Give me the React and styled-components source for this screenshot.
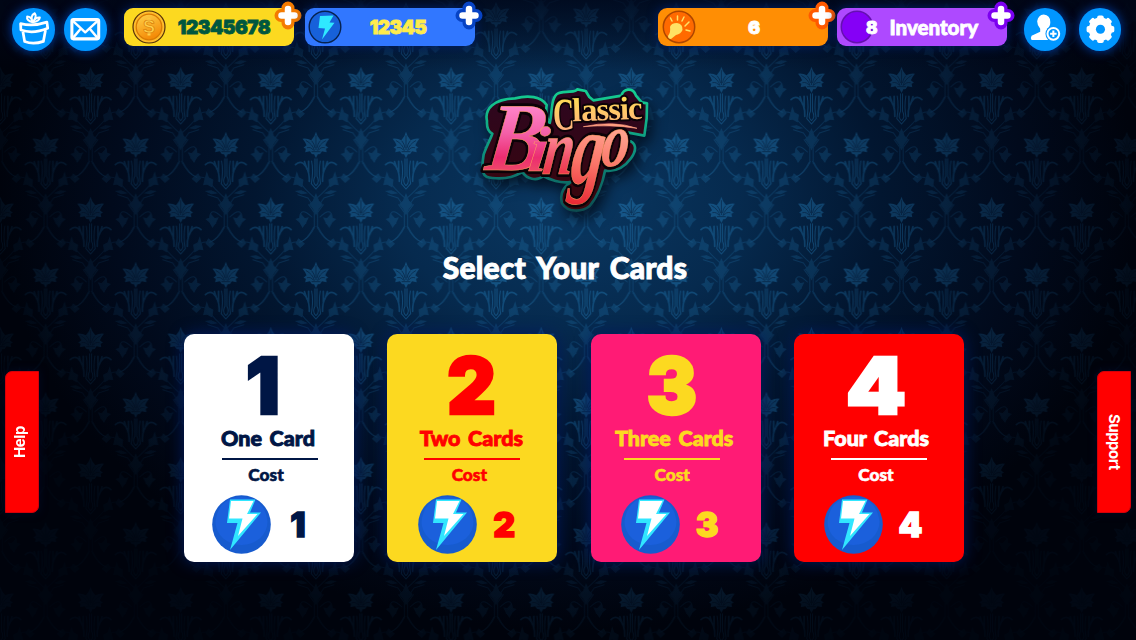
import React from "react";
import styled, { createGlobalStyle, css } from "styled-components";

const Global = createGlobalStyle`
  * { box-sizing: border-box; }
  body { margin: 0; background: #000310; overflow: hidden; }
`;

const Screen = styled.main`
  position: relative;
  isolation: isolate;
  width: 1136px;
  height: 640px;
  overflow: hidden;
  display: flex;
  flex-direction: column;
  font-family: Lato, "Liberation Sans", sans-serif;
  color: #fff;
`;

const Wallpaper = styled.svg`
  position: absolute;
  inset: 0;
  z-index: -1;
`;

const TopBar = styled.header`
  display: flex;
  align-items: flex-start;
  height: 54px;
  padding: 8px 0 0 12px;
`;

const RoundButton = styled.button`
  flex: none;
  width: 42.5px;
  height: 42.5px;
  margin: 0 ${(p) => p.$after}px 0 0;
  padding: 0;
  border: 0;
  border-radius: 50%;
  background: #0096ff;
  box-shadow: 0 0 11px #003fae;
  svg { display: block; width: 100%; height: 100%; }
`;

const Pill = styled.div`
  position: relative;
  flex: none;
  display: flex;
  align-items: center;
  justify-content: center;
  width: 170px;
  height: 38px;
  margin-right: ${(p) => p.$after}px;
  padding-left: ${(p) => p.$indent}px;
  border-radius: 9px;
  background: ${(p) => p.$bg};
  color: ${(p) => p.$ink};
  box-shadow: 0 0 11px #00206b;
`;

const Amount = styled.span`
  z-index: 1;
  padding-top: 1px;
  font: 900 ${(p) => p.$size || 19}px/38px Inter, sans-serif;
  letter-spacing: ${(p) => p.$tracking || 0}px;
  -webkit-text-stroke: 0.8px currentColor;
`;

const InventoryLabel = styled.span`
  font-size: 20.5px;
  font-weight: 900;
  line-height: 38px;
  margin-left: 12px;
  -webkit-text-stroke: 0.8px currentColor;
`;

const PillIcon = styled.svg`
  position: absolute;
  left: ${(p) => p.$left}px;
  top: 2px;
  width: 34px;
  height: 34px;
`;

const PlusBadge = styled.svg`
  position: absolute;
  right: -7.5px;
  top: -7px;
  width: 28px;
  height: 29px;
`;

const Hero = styled.section`
  display: flex;
  flex-direction: column;
  align-items: center;
  height: 280px;
  padding: 21px 6px 0 0;
`;

const Logo = styled.svg`
  display: block;
  width: 200px;
  height: 150px;
  filter: drop-shadow(4px 7px 7px rgba(0, 5, 15, 0.75));
`;

const Title = styled.h1`
  margin: 21.5px 0 0;
  font-size: 30px;
  font-weight: 900;
  line-height: 40px;
  letter-spacing: 0.2px;
  word-spacing: 4px;
  white-space: nowrap;
  -webkit-text-stroke: 0.9px currentColor;
`;

const CardRow = styled.section`
  display: grid;
  grid-template-columns: repeat(4, 170px);
  column-gap: 33.33px;
  padding-left: 184px;
`;

const Card = styled.button`
  display: flex;
  flex-direction: column;
  align-items: flex-start;
  height: 228px;
  padding: 0;
  border: 0;
  border-radius: 10px;
  background: ${(p) => p.$bg};
  color: ${(p) => p.$ink};
  font-family: inherit;
  box-shadow: 0 0 16px #001b62;
`;

const centred = css`
  width: ${(p) => p.$mid * 2}px;
  text-align: center;
  white-space: nowrap;
`;

const BigNumber = styled.strong`
  ${centred}
  height: 91px;
  padding-top: 10px;
  font: 900 79px/82px Inter, sans-serif;
  -webkit-text-stroke: 2.5px currentColor;
  transform: scaleX(${(p) => p.$stretch || 1});
`;

const CardName = styled.span`
  ${centred}
  height: 33px;
  font-size: 21.5px;
  font-weight: 900;
  line-height: 26px;
  word-spacing: 2.5px;
  -webkit-text-stroke: 0.9px currentColor;
`;

const Divider = styled.span`
  width: 96px;
  height: 2px;
  margin-left: ${(p) => p.$left}px;
  background: currentColor;
`;

const CostLabel = styled.span`
  ${centred}
  height: 34.5px;
  padding-top: 4px;
  font-size: 17.3px;
  font-weight: 900;
  line-height: 22px;
  -webkit-text-stroke: 0.6px currentColor;
`;

const CostRow = styled.span`
  display: flex;
  align-items: center;
  height: 59px;
  padding-left: ${(p) => p.$left}px;
`;

const CostBolt = styled.svg`
  width: 59px;
  height: 59px;
`;

const CostNumber = styled.strong`
  width: 54px;
  text-align: center;
  font: 900 34px/59px Inter, sans-serif;
  -webkit-text-stroke: 1.4px currentColor;
`;

const SideTab = styled.button`
  position: absolute;
  top: 371px;
  ${(p) => (p.$side === "left" ? "left: 5px; padding: 0 4px 0 0;" : "right: 5px; padding: 0;")}
  width: 34px;
  height: 142px;
  border: 1px solid #d40008;
  border-radius: 7px 0 7px 0;
  background: #ff0000;
  color: #fff;
  display: flex;
  align-items: center;
  justify-content: center;
  box-shadow: 0 0 8px #000a24;
`;

const TabText = styled.span`
  writing-mode: vertical-rl;
  font: 700 15px/20px Inter, sans-serif;
  letter-spacing: ${(p) => p.$tracking}px;
  ${(p) => p.$flip && "transform: rotate(180deg);"}
`;

function Motif() {
  return (
    <g fill="none" stroke="#1e6fa6" strokeWidth="3" strokeLinecap="round">
      <g fill="#1e6fa6" stroke="none" opacity="0.75">
        <path d="M0 -44Q3 -30 14 -18Q26 -25 40 -23Q32 -14 28 -3L37 4L30 7L32 18L18 15Q12 27 6 23L0 35L-6 23Q-12 27 -18 15L-32 18L-30 7L-37 4L-28 -3Q-32 -14 -40 -23Q-26 -25 -14 -18Q-3 -30 0 -44Z" />
      </g>
      <path stroke="#082747" strokeWidth="2.400" d="M0 -32V10M-29 -17Q-9 -6 -5 12M29 -17Q9 -6 5 12M-26 4Q-14 1 -8 11M26 4Q14 1 8 11M-12 -16Q-5 -8 -3 4M12 -16Q5 -8 3 4M-12 16H12" />
      <path opacity=".75" d="M-3 37V90Q-12 108 0 118Q12 108 3 90V37M-13 44Q-7 75 -14 112L0 128L14 112Q7 75 13 44" />
      <path opacity=".65" strokeWidth="5" d="M-20 105Q-18 70 -38 51Q-50 43 -61 55M20 105Q18 70 38 51Q50 43 61 55M-22 77V45M22 77V45M-27 68L-34 46M27 68L34 46" />
      <g opacity=".42">
        <path d="M0 158Q-35 128 -48 108T-86 93Q-110 85 -128 48M0 158Q35 128 48 108T86 93Q110 85 128 48" />
        <path d="M0 190L-24 155L-54 145M0 190L24 155L54 145M-5 246V198L-22 175M5 246V198L22 175M-12 212Q-45 180 -48 212T-30 230M12 212Q45 180 48 212T30 230M-3 240Q-20 278 -48 288M3 240Q20 278 48 288" />
        <g fill="#1e6fa6">
          <path d="M-57 80L-52 94L-39 101L-42 121L-56 113L-66 115L-63 102ZM57 80L52 94L39 101L42 121L56 113L66 115L63 102Z" />
          <path d="M0 144L8 164L18 174L7 188L0 204L-7 188L-18 174L-8 164ZM-46 203L-34 217L-24 215L-31 229L-40 242L-47 228L-58 219L-48 216ZM46 203L34 217L24 215L31 229L40 242L47 228L58 219L48 216Z" />
          <path d="M-83 83L-76 96L-88 108L-100 97ZM83 83L76 96L88 108L100 97ZM-29 140L-43 142L-58 135L-44 133ZM29 140L43 142L58 135L44 133Z" />
        </g>
      </g>
    </g>
  );
}

function Background() {
  const spots = [[135, 100], [135, -290], [0, -95], [270, -95], [0, 295], [270, 295], [135, 490]];
  return (
    <Wallpaper width="1136" height="640" viewBox="0 0 1136 640">
      <defs>
        <pattern id="damask" patternUnits="userSpaceOnUse" x="45.6" y="48" width="90.1" height="130" viewBox="0 0 270 390" preserveAspectRatio="none">
          {spots.map(([x, y]) => (
            <g key={`${x}:${y}`} transform={`translate(${x} ${y})`}><Motif /></g>
          ))}
        </pattern>
        <radialGradient id="glow" gradientUnits="userSpaceOnUse" cx="0" cy="0" r="1" gradientTransform="translate(568 200) scale(570 430)">
          <stop offset="0" stopColor="#0a3862" />
          <stop offset="0.3" stopColor="#062a4e" />
          <stop offset="0.55" stopColor="#021630" />
          <stop offset="0.8" stopColor="#010a1c" />
          <stop offset="1" stopColor="#00030c" />
        </radialGradient>
        <radialGradient id="fade" gradientUnits="userSpaceOnUse" cx="0" cy="0" r="1" gradientTransform="translate(568 210) scale(610 480)">
          <stop offset="0" stopColor="#fff" />
          <stop offset="0.45" stopColor="#b4b4b4" />
          <stop offset="0.75" stopColor="#5c5c5c" />
          <stop offset="1" stopColor="#161616" />
        </radialGradient>
        <linearGradient id="topShade" x1="0" y1="0" x2="0" y2="1">
          <stop offset="0" stopColor="#000618" stopOpacity=".75" />
          <stop offset="1" stopColor="#000618" stopOpacity="0" />
        </linearGradient>
        <mask id="vignette"><rect width="1136" height="640" fill="url(#fade)" /></mask>
      </defs>
      <rect width="1136" height="640" fill="url(#glow)" />
      <rect width="1136" height="640" fill="url(#damask)" mask="url(#vignette)" opacity=".85" />
      <rect width="1136" height="70" fill="url(#topShade)" />
    </Wallpaper>
  );
}

function Plus({ color }) {
  return (
    <PlusBadge viewBox="0 0 28 29">
      <g fill="none" strokeLinecap="round">
        <path d="M14 7V22M7 14.5H21" stroke={color} strokeWidth="13" />
        <path d="M14 8V21M7.5 14.5H20.5" stroke="#fff" strokeWidth="6.5" />
      </g>
    </PlusBadge>
  );
}

function Coin() {
  return (
    <PillIcon $left={8} viewBox="0 0 34 34">
      <defs>
        <linearGradient id="gold" x1="0" y1="0" x2="0.4" y2="1">
          <stop offset="0" stopColor="#ffd34a" />
          <stop offset="1" stopColor="#f48b08" />
        </linearGradient>
      </defs>
      <circle cx="17" cy="17" r="16" fill="#ffbd2c" stroke="#54310b" strokeWidth="1.2" />
      <circle cx="17" cy="17" r="12.8" fill="url(#gold)" stroke="#d97b04" strokeWidth="1.3" />
      <path d="M17 8.500V12M17 22V25.500" stroke="#ffce48" strokeWidth="3" />
      <text x="17" y="23.2" textAnchor="middle" fontFamily="Liberation Sans, sans-serif" fontWeight="700" fontSize="18" fill="#ffce48" stroke="#d87e09" strokeWidth=".7">S</text>
    </PillIcon>
  );
}

function SmallBolt() {
  return (
    <PillIcon $left={3} viewBox="0 0 34 34">
      <circle cx="17" cy="17" r="15.8" fill="#1761da" stroke="#06224f" strokeWidth="1.4" />
      <path d="M12 6L25.500 5.500L21.500 12.500L26.500 12.800L14 29.500L17 18.500L10.500 18Z" fill="#2fe8ff" />
    </PillIcon>
  );
}

function Clap() {
  return (
    <PillIcon $left={3.5} viewBox="0 0 34 34">
      <circle cx="17" cy="17" r="15.7" fill="#ff6a00" stroke="#ad4600" strokeWidth="1.5" />
      <path d="M8 17Q9 13 15 13Q21 14 20.500 20Q19 24 14 25L9 29Q6 29 6 26Q9 22 8 17Z" fill="#ffe164" />
      <path d="M10 11L8.500 8M15.500 10V6M20 11L22 7M23 16L27 12M24 20L28 21" stroke="#ffe164" strokeWidth="1.5" strokeLinecap="round" />
    </PillIcon>
  );
}

function Orb() {
  return (
    <PillIcon $left={2.5} viewBox="0 0 34 34">
      <circle cx="17" cy="17" r="15.7" fill="#8500f6" stroke="#6510b0" strokeWidth="1.5" />
    </PillIcon>
  );
}

function Gift() {
  return (
    <svg viewBox="0 0 42 42" fill="none" stroke="#fff" strokeWidth="2.7" strokeLinejoin="round" strokeLinecap="round">
      <path d="M8.500 15.500Q21 18.500 34.500 14L35.300 20Q21 26 8.800 21.800ZM10.800 23.500L12.500 33.200Q21 36.500 31 33L33 22.500" />
      <path d="M20.500 14Q14 12.500 15 8.500Q19 8.500 20.500 14Q17.500 7.500 22.500 5.200Q25 8.500 20.500 14Q23.500 9 27.500 9.500Q27 13 20.500 14Z" strokeWidth="2" />
    </svg>
  );
}

function Mail() {
  return (
    <svg viewBox="0 0 42 42" fill="none" stroke="#fff" strokeWidth="3" strokeLinejoin="round" strokeLinecap="round">
      <rect x="7.800" y="11.500" width="26.500" height="19" rx="1.500" />
      <path d="M8.500 12.500L21 24L33.500 12.500M8.500 30L16.500 20.500M33.500 30L25.500 20.500" strokeWidth="2.400" />
    </svg>
  );
}

function AddFriend() {
  return (
    <svg viewBox="0 0 42 42">
      <path d="M19.500 6.500Q26 7 26 14Q26 18 23 20.500V23.500L28 26V31.500H7.500Q6 30 7.500 27.500L16 23.500V20.500Q13 17 13 13Q14 7 19.500 6.500Z" fill="#fff" />
      <circle cx="29" cy="25.500" r="7.800" fill="#0096ff" />
      <circle cx="29" cy="25.500" r="5.800" fill="none" stroke="#fff" strokeWidth="2" />
      <path d="M29 22.300V28.700M25.800 25.500H32.200" stroke="#fff" strokeWidth="2" />
    </svg>
  );
}

function Gear() {
  return (
    <svg viewBox="0 0 42 42">
      <g fill="#fff">
        {[0, 45, 90, 135].map((a) => (
          <rect key={a} x="18" y="7.300" width="6.400" height="27.400" rx="1.800" transform={`rotate(${a} 21.200 21)`} />
        ))}
        <circle cx="21.200" cy="21" r="11.600" />
      </g>
      <circle cx="21.200" cy="21" r="4.500" fill="#0096ff" />
    </svg>
  );
}

function BigBolt() {
  return (
    <CostBolt viewBox="0 0 59 59">
      <circle cx="29.500" cy="29.500" r="29.300" fill="#175bce" />
      <path d="M3.500 27A26 23 0 0 0 55.500 27Q53 3 29.500 2Q6 3 3.500 27Z" fill="#1b60dc" />
      <path d="M18 4.500H43.500L38 17.500H49L18 55L25.500 28H15Z" fill="#31e6ff" />
      <path d="M19 6H41.500L35 19H45.500L26 41L30.500 23.500H17Z" fill="#fff" />
    </CostBolt>
  );
}

const silhouette =
  "M66 138C58 102 85 72 150 70C190 60 228 64 245 90C242 112 246 132 254 144C262 120 256 65 280 55C305 44 332 56 337 43L362 48L373 66L385 76L470 62C472 42 504 34 513 62L530 82L546 85L545 130L538 182L486 172L487 195C515 202 516 225 498 250C480 275 458 292 420 287C414 320 398 365 374 393C350 412 308 413 291 385C282 352 300 334 318 320C290 328 250 312 235 303C215 320 185 312 172 291C153 302 130 314 82 309C51 309 48 288 56 238C68 205 78 190 82 176C68 170 65 155 66 138Z";

const bingoLetters = [
  { char: "B", x: 62, y: 284, size: 292, length: 176, fill: "url(#pink)" },
  { char: "i", x: 191, y: 288, size: 192, length: 58, fill: "url(#pink)" },
  { char: "n", x: 235, y: 298, size: 232, length: 92, fill: "url(#rose)" },
  { char: "g", x: 322, y: 325, size: 305, length: 98, fill: "url(#coral)" },
  { char: "o", x: 408, y: 274, size: 232, length: 82, fill: "url(#coral)" },
];

function BingoWord({ outline }) {
  return (
    <text
      transform="translate(30 0) skewX(-7)"
      fontFamily="Liberation Serif, serif"
      fontStyle="italic"
      fontWeight="700"
      strokeLinejoin="round"
      stroke={outline ? "#0b0207" : "#ffa060"}
      strokeWidth={outline ? 18 : 1.5}
    >
      {bingoLetters.map((l) => (
        <tspan key={l.char} x={l.x} y={l.y} fontSize={l.size} textLength={l.length} lengthAdjust="spacingAndGlyphs" fill={outline ? "#0b0207" : l.fill}>
          {l.char}
        </tspan>
      ))}
    </text>
  );
}

function ClassicWord(props) {
  return (
    <g fontFamily="Liberation Serif, serif" fontWeight="700" strokeLinejoin="round" {...props}>
      <text transform="rotate(-2 400 130)">
        <tspan x="264" y="160" fontSize="136" textLength="64" lengthAdjust="spacingAndGlyphs">C</tspan>
        <tspan x="322" y="136" fontSize="100">l</tspan>
        <tspan x="349" y="136" fontSize="98" textLength="184">assic</tspan>
      </text>
    </g>
  );
}

function ClassicBingo() {
  return (
    <Logo viewBox="0 0 600 450">
      <defs>
        <linearGradient id="pink" gradientUnits="userSpaceOnUse" x1="150" y1="90" x2="150" y2="300">
          <stop offset="0" stopColor="#ff86cb" />
          <stop offset="0.4" stopColor="#f460a8" />
          <stop offset="0.75" stopColor="#ec2c70" />
          <stop offset="1" stopColor="#f05066" />
        </linearGradient>
        <linearGradient id="rose" gradientUnits="userSpaceOnUse" x1="290" y1="180" x2="280" y2="300">
          <stop offset="0" stopColor="#ff8f9a" />
          <stop offset="0.6" stopColor="#f04c66" />
          <stop offset="1" stopColor="#ee3546" />
        </linearGradient>
        <linearGradient id="coral" gradientUnits="userSpaceOnUse" x1="420" y1="170" x2="370" y2="390">
          <stop offset="0" stopColor="#ffa08c" />
          <stop offset="0.45" stopColor="#fb7468" />
          <stop offset="1" stopColor="#e92a35" />
        </linearGradient>
        <linearGradient id="cream" gradientUnits="userSpaceOnUse" x1="400" y1="50" x2="400" y2="160">
          <stop offset="0" stopColor="#ffe34d" />
          <stop offset="1" stopColor="#ffb27e" />
        </linearGradient>
        <linearGradient id="rim" x1="0" y1="0" x2="0" y2="1">
          <stop offset="0" stopColor="#15cf91" />
          <stop offset="0.55" stopColor="#0d8d7c" />
          <stop offset="1" stopColor="#0c4c50" />
        </linearGradient>
        <linearGradient id="wine" x1="0" y1="0" x2="0" y2="1">
          <stop offset="0" stopColor="#2c0620" />
          <stop offset="1" stopColor="#3a060c" />
        </linearGradient>
      </defs>
      <path d={silhouette} fill="url(#wine)" stroke="url(#rim)" strokeWidth="8" strokeLinejoin="round" />
      <g aria-hidden="true">
        <BingoWord outline />
        <ClassicWord fill="#0b0207" stroke="#0b0207" strokeWidth="12" />
      </g>
      <BingoWord />
      <ClassicWord fill="url(#cream)" />
      <path d="M355 155Q445 135 516 160Q440 148 355 155Z" fill="#ff9d80" stroke="#ff9d80" strokeWidth="2" />
    </Logo>
  );
}

const cards = [
  { n: 1, name: "One Card", bg: "#ffffff", ink: "#001645", big: 79, mid: 84, rule: 38, cost: 82, bolt: 28 },
  { n: 2, name: "Two Cards", bg: "#fcd920", ink: "#ff0000", big: 84.5, mid: 84, rule: 37, cost: 82, bolt: 31 },
  { n: 3, name: "Three Cards", bg: "#ff1b75", ink: "#fcd920", big: 81, mid: 83.5, rule: 33, cost: 81.5, bolt: 30.5 },
  { n: 4, name: "Four Cards", bg: "#ff0000", ink: "#ffffff", big: 82, mid: 82, rule: 37, cost: 82, bolt: 30.5 },
];

export default function App() {
  return (
    <Screen>
      <Global />
      <Background />
      <TopBar>
        <RoundButton $after={9.5}><Gift /></RoundButton>
        <RoundButton $after={17.5}><Mail /></RoundButton>
        <Pill $bg="#fcd920" $ink="#00573f" $after={11} $indent={30}>
          <Coin /><Amount $tracking={-0.5}>12345678</Amount><Plus color="#f47b00" />
        </Pill>
        <Pill $bg="#3177ff" $ink="#ffec4c" $after={183} $indent={16}>
          <SmallBolt /><Amount $tracking={-0.6}>12345</Amount><Plus color="#0743c4" />
        </Pill>
        <Pill $bg="#ff8e04" $ink="#fff" $after={9} $indent={22}>
          <Clap /><Amount $size={18}>6</Amount><Plus color="#ff5a00" />
        </Pill>
        <Pill $bg="#ae49ff" $ink="#fff" $after={16.5} $indent={0}>
          <Orb /><Amount $size={17}>8</Amount><InventoryLabel>Inventory</InventoryLabel><Plus color="#7c00f0" />
        </Pill>
        <RoundButton $after={12.5}><AddFriend /></RoundButton>
        <RoundButton $after={0}><Gear /></RoundButton>
      </TopBar>
      <Hero>
        <ClassicBingo />
        <Title>Select Your Cards</Title>
      </Hero>
      <CardRow>
        {cards.map((c) => (
          <Card key={c.n} $bg={c.bg} $ink={c.ink}>
            <BigNumber $mid={c.big} $stretch={c.n === 4 ? 1.09 : 0.96}>{c.n}</BigNumber>
            <CardName $mid={c.mid}>{c.name}</CardName>
            <Divider $left={c.rule} />
            <CostLabel $mid={c.cost}>Cost</CostLabel>
            <CostRow $left={c.bolt}>
              <BigBolt />
              <CostNumber>{c.n}</CostNumber>
            </CostRow>
          </Card>
        ))}
      </CardRow>
      <SideTab $side="left"><TabText $flip $tracking={-0.4}>Help</TabText></SideTab>
      <SideTab $side="right"><TabText $tracking={-0.5}>Support</TabText></SideTab>
    </Screen>
  );
}
